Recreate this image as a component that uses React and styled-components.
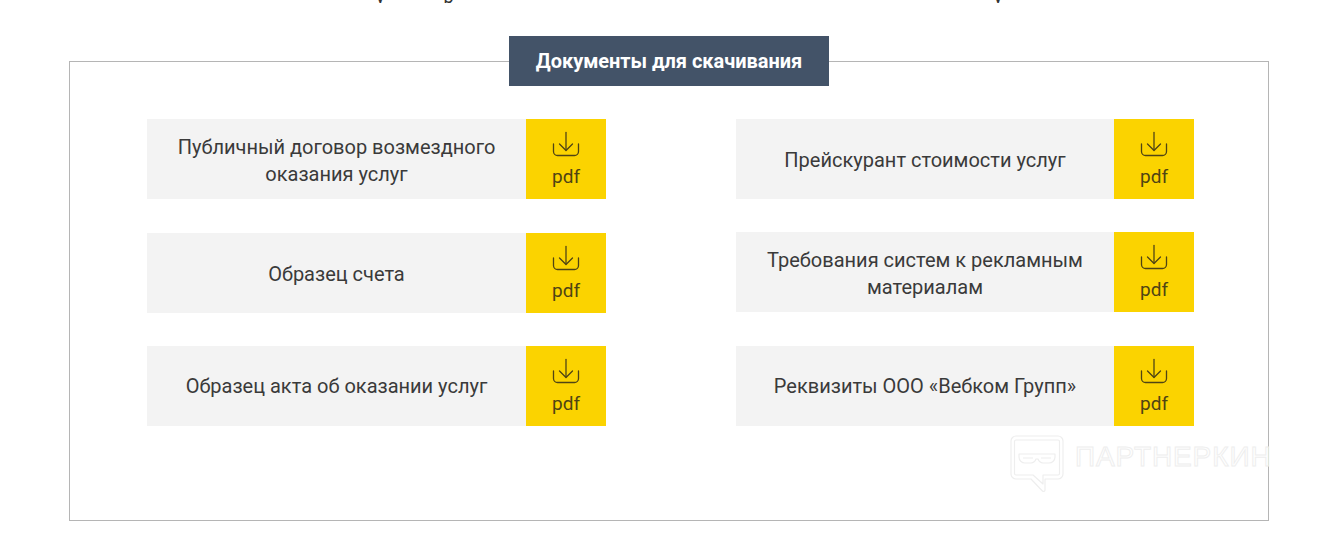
import React from 'react'
import styled, { createGlobalStyle } from 'styled-components'

const Global = createGlobalStyle`
  html, body {
    margin: 0;
    padding: 0;
    background: #fff;
    font-family: Roboto, "Liberation Sans", sans-serif;
  }
`

const Page = styled.div`
  width: 1323px;
  height: 543px;
  overflow: hidden;
  position: relative;
`

const CutLine = styled.div`
  height: 3px;
  overflow: hidden;
  display: flex;
  padding-left: 376px;
  gap: 59px;
  font-size: 18px;
  line-height: 3px;
  color: #333;
`

const CutLetter = styled.span`
  display: block;
  margin-top: -5px;
  margin-right: ${(p) => p.$after || 0}px;
`

const Frame = styled.section`
  box-sizing: border-box;
  width: 1200px;
  height: 460px;
  margin: 58px 0 0 69px;
  border: 1px solid #b5b5b5;
  display: flex;
  flex-direction: column;
  align-items: center;
`

const Title = styled.h2`
  width: 320px;
  height: 50px;
  margin: -26px 0 33px;
  background: #435368;
  color: #fff;
  font-size: 20px;
  font-weight: 700;
  letter-spacing: -0.04px;
  line-height: 50px;
  text-align: center;
`

const Columns = styled.div`
  display: grid;
  grid-template-columns: 459px 458px;
  column-gap: 130px;
  align-self: flex-start;
  margin-left: 77px;
`

const Column = styled.div`
  display: flex;
  flex-direction: column;
`

const Doc = styled.a`
  display: flex;
  height: 80px;
  margin-top: ${(p) => p.$top || 0}px;
  background: #f3f3f3;
  color: #3a3a3a;
  text-decoration: none;
`

const DocName = styled.span`
  flex: 1;
  display: flex;
  align-items: center;
  justify-content: center;
  padding: ${(p) => p.$pad}px 20px 0;
  font-size: 20px;
  line-height: 27px;
  text-align: center;
`

const Pdf = styled.span`
  flex: none;
  width: 80px;
  background: #fbd300;
  color: #4f4414;
  display: flex;
  flex-direction: column;
  align-items: center;
  padding-top: 12px;
  box-sizing: border-box;
  font-size: 19px;
  line-height: 24px;
`

const PdfIcon = styled.svg`
  display: block;
  width: 28px;
  height: 28px;
  margin-bottom: 6px;
`

const Watermark = styled.div`
  position: absolute;
  left: 1010px;
  top: 435px;
  display: flex;
  gap: 11px;
  pointer-events: none;
`

const MarkIcon = styled.svg`
  display: block;
  width: 54px;
  height: 57px;
`

const MarkText = styled.span`
  margin-top: 7px;
  font-family: "Liberation Sans", sans-serif;
  font-size: 28px;
  line-height: 30px;
  letter-spacing: 0.9px;
  color: transparent;
  -webkit-text-stroke: 1px #eeeeee;
`

const DownloadIcon = () => (
  <PdfIcon viewBox="0 0 28 28" fill="none" stroke="currentColor" strokeWidth="1.3" strokeLinecap="round" strokeLinejoin="round">
    <path d="M14 1.5V19" />
    <path d="M7.5 13l6.5 6.5 6.5-6.5" />
    <path d="M1.5 13v7.5a4 4 0 0 0 4 4h17a4 4 0 0 0 4-4V13" />
  </PdfIcon>
)

const left = [
  { name: 'Публичный договор возмездного оказания услуг', top: 0, pad: 4 },
  { name: 'Образец счета', top: 34, pad: 2 },
  { name: 'Образец акта об оказании услуг', top: 33, pad: 0 },
]

const right = [
  { name: 'Прейскурант стоимости услуг', top: 0, pad: 2 },
  { name: 'Требования систем к рекламным материалам', top: 33, pad: 4 },
  { name: 'Реквизиты ООО «Вебком Групп»', top: 34, pad: 0 },
]

const DocList = ({ items }) => (
  <Column>
    {items.map((item) => (
      <Doc key={item.name} href="#" $top={item.top}>
        <DocName $pad={item.pad}>{item.name}</DocName>
        <Pdf>
          <DownloadIcon />
          pdf
        </Pdf>
      </Doc>
    ))}
  </Column>
)

export default function App() {
  return (
    <Page>
      <Global />
      <CutLine>
        <CutLetter>у</CutLetter>
        <CutLetter $after={481}>р</CutLetter>
        <CutLetter>у</CutLetter>
      </CutLine>
      <Frame>
        <Title>Документы для скачивания</Title>
        <Columns>
          <DocList items={left} />
          <DocList items={right} />
        </Columns>
      </Frame>
      <Watermark>
        <MarkIcon viewBox="0 0 54 57" fill="none" stroke="#eeeeee" strokeWidth="1.2" strokeLinejoin="round">
          <path d="M6 1h42a5 5 0 0 1 5 5v33a5 5 0 0 1-5 5H35v11a1.5 1.5 0 0 1-2.6 1L21 44H6a5 5 0 0 1-5-5V6a5 5 0 0 1 5-5z" />
          <path d="M6 5h42a1.5 1.5 0 0 1 1.5 1.5v32a1.5 1.5 0 0 1-1.5 1.5H33v9L23 40H6a1.5 1.5 0 0 1-1.5-1.5v-32A1.5 1.5 0 0 1 6 5z" />
          <path d="M9 19h36v3a6 6 0 0 1-6 6h-6a6 6 0 0 1-5-4h-2a6 6 0 0 1-5 4h-6a6 6 0 0 1-6-6z" />
          <path d="M13 23h10M31 23h10" />
        </MarkIcon>
        <MarkText>ПАРТНЕРКИН</MarkText>
      </Watermark>
    </Page>
  )
}
